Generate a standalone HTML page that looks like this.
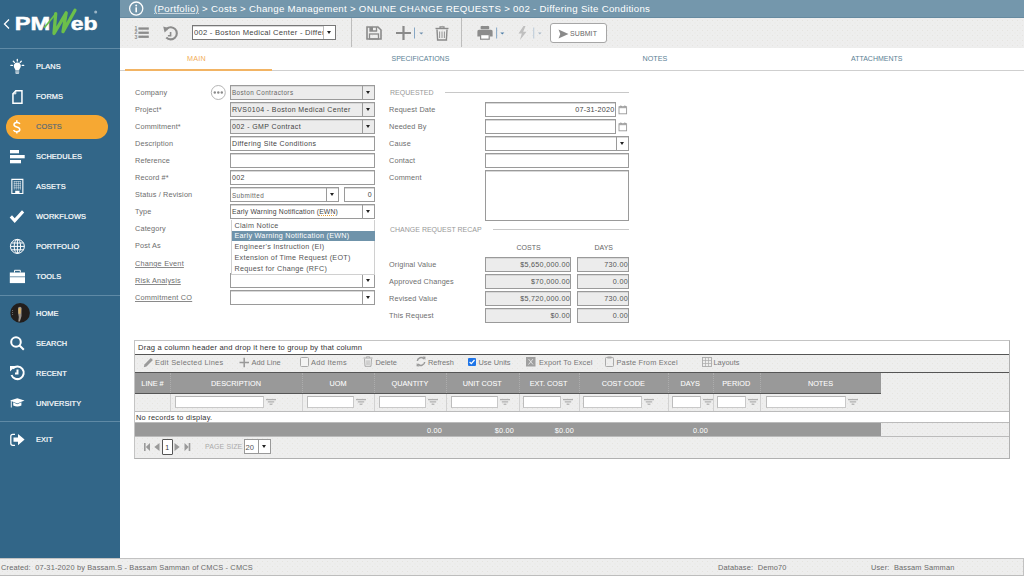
<!DOCTYPE html>
<html><head><meta charset="utf-8">
<style>
*{box-sizing:border-box;margin:0;padding:0}
html,body{width:1024px;height:576px;overflow:hidden;background:#fff;font-family:"Liberation Sans",sans-serif;position:relative}
.a{position:absolute}
#side{left:0;top:0;width:120px;height:558px;background:#326688}
.nav{position:absolute;left:36px;color:#fff;font-size:7.4px;font-weight:normal;-webkit-text-stroke:0.2px #fff;letter-spacing:0.08px;line-height:8px}
.sep{position:absolute;left:0;width:120px;height:1px;background:#5f8aa6}
#hdr{left:120px;top:0;width:904px;height:18px;background:#7497ac;border-bottom:1px solid #668aa0}
#tb{left:120px;top:18px;width:904px;height:29.5px;background-color:#eeeeee;background-image:radial-gradient(circle,#e6e4df 0.6px,transparent 0.7px),radial-gradient(circle,#e6e4df 0.6px,transparent 0.7px);background-size:5px 5px;background-position:0 0,2.5px 2.5px}
.lbl{position:absolute;left:135px;color:#6e6e6e;font-size:7.3px;line-height:10px;letter-spacing:0.15px;margin-top:1px}
.lbl2{position:absolute;left:389px;color:#6e6e6e;font-size:7.3px;line-height:10px;letter-spacing:0.15px;margin-top:1px}
.inp{position:absolute;border:1px solid #9a9a9a;background:#fff;height:15px;box-shadow:inset 0 1px 0 #d8d8d8}
.ro{background-color:#ececec;background-image:radial-gradient(circle,#e3e1dd 0.6px,transparent 0.7px);background-size:4px 4px}
.dd{position:absolute;right:0;top:0;width:12px;height:13px;border-left:1px solid #9a9a9a}
.dd:after{content:"";position:absolute;left:3.3px;top:5px;border-left:2.7px solid transparent;border-right:2.7px solid transparent;border-top:3px solid #222}
.it{position:absolute;left:1px;top:2px;font-size:7px;color:#444;white-space:nowrap;line-height:10px;letter-spacing:0.38px}
.tab{position:absolute;top:55px;font-size:7.2px;color:#5b7f95;letter-spacing:0.2px;line-height:8px}
.gh{position:absolute;top:373px;height:20px;color:#fff;font-size:7.3px;font-weight:normal;-webkit-text-stroke:0.05px #fff;line-height:21px;text-align:center;letter-spacing:0}
.gcb{position:absolute;top:373px;width:1px;height:20px;border-left:1px dotted #adadad}.gcb:after{content:"";position:absolute;left:-1px;top:21px;width:1px;height:17px;background:#d2d2d2}
.fi{position:absolute;top:396px;height:12px;background:#fff;border:1px solid #c9c9c9;border-top-color:#b5b5b5;border-left-color:#bdbdbd}
.fic{position:absolute;top:398px;width:10px;height:8px}
.fic:before{content:"";position:absolute;left:0;top:1px;width:10px;height:1px;background:#999;box-shadow:2px 2px 0 -0px #fff}
.gt{position:absolute;top:357.8px;font-size:7.4px;color:#777;line-height:10px;white-space:nowrap}
.ft{position:absolute;top:562.8px;font-size:7.4px;color:#6a6a6a;line-height:10px;white-space:nowrap;letter-spacing:0.17px}
.dli{left:3px;font-size:7.2px;color:#555;line-height:10px;white-space:nowrap;letter-spacing:0.28px}
.sect{font-size:7px;color:#999;line-height:9px;letter-spacing:0}
.dots{background-color:#eeeeee;background-image:radial-gradient(circle,#e6e4df 0.6px,transparent 0.7px),radial-gradient(circle,#e6e4df 0.6px,transparent 0.7px);background-size:5px 5px;background-position:0 0,2.5px 2.5px}
</style></head><body>

<!-- SIDEBAR -->
<div id="side" class="a">
  <div class="sep" style="top:48px"></div>
  <div class="sep" style="top:295px"></div>
  <div class="sep" style="top:421px"></div>
  <!-- logo -->
  <svg class="a" style="left:0;top:0" width="120" height="48" viewBox="0 0 120 48">
    <path d="M9 19.5 L4.5 24 L9 28.5" fill="none" stroke="#fff" stroke-width="1.3"/>
    <text x="14.8" y="29.8" font-family="Liberation Sans" font-weight="bold" font-size="19" fill="#fff" stroke="#fff" stroke-width="0.5" textLength="35.4" lengthAdjust="spacingAndGlyphs">PM</text>
    <text x="70.8" y="29.8" font-family="Liberation Sans" font-weight="bold" font-size="19" fill="#fff" stroke="#fff" stroke-width="0.5" textLength="26.8" lengthAdjust="spacingAndGlyphs">eb</text>
    <path d="M44.3 27.8 L55.7 13.7" fill="none" stroke="#6cc04a" stroke-width="1.7"/>
    <path d="M55.7 13.7 L54 33.5 L66.2 12.8 L63 31.7 L75 10.2" fill="none" stroke="#6cc04a" stroke-width="3.3" stroke-linejoin="round" stroke-linecap="round"/>
    <circle cx="95.7" cy="12" r="1.5" fill="#9bb5c6"/>
  </svg>
  <!-- nav items -->
  <div class="nav" style="top:62.5px">PLANS</div>
  <div class="nav" style="top:92.5px">FORMS</div>
  <div class="a" style="left:6px;top:114.5px;width:102px;height:24px;border-radius:12px;background:#f6a833"></div>
  <div class="nav" style="top:122.5px;color:#5b6b76;-webkit-text-stroke:0.2px #5b6b76">COSTS</div>
  <div class="nav" style="top:152.5px">SCHEDULES</div>
  <div class="nav" style="top:182.5px">ASSETS</div>
  <div class="nav" style="top:212.5px">WORKFLOWS</div>
  <div class="nav" style="top:242.5px">PORTFOLIO</div>
  <div class="nav" style="top:272.5px">TOOLS</div>
  <div class="nav" style="top:309.5px">HOME</div>
  <div class="nav" style="top:339.5px">SEARCH</div>
  <div class="nav" style="top:369.5px">RECENT</div>
  <div class="nav" style="top:399.5px">UNIVERSITY</div>
  <div class="nav" style="top:435.5px">EXIT</div>
  <!-- icons -->
  <svg class="a" style="left:0;top:50px" width="34" height="400" viewBox="0 50 34 400">
    <g fill="#fff" stroke="none">
      <!-- bulb -->
      <path d="M17.3 62.4 C14.8 62.4 13.6 64.3 13.8 66.3 C14 68 15.3 69 15.4 70.3 H19.2 C19.3 69 20.6 68 20.8 66.3 C21 64.3 19.8 62.4 17.3 62.4 Z"/>
      <rect x="15.3" y="70.6" width="3.9" height="0.9" opacity="0.85"/><rect x="15.3" y="71.8" width="3.9" height="0.9" opacity="0.85"/><rect x="15.6" y="73" width="3.3" height="0.8" opacity="0.85"/>
      <g stroke="#fff" stroke-width="1.3" fill="none" stroke-linecap="round">
        <path d="M17.3 59.4v1.6M13.3 61.2l1.1 1.2M21.3 61.2l-1.1 1.2M10.9 65.4h1.5M22.2 65.4h1.5"/>
      </g>
      <!-- forms -->
      <path d="M15.5 90 H22.7 V104 H12.2 V93.5 Z M13.7 94.1 V102.5 H21.2 V91.5 H16.1 Z" fill-rule="evenodd"/><path d="M12.8 93.8 L15.8 93.8 L15.8 90.5" fill="none" stroke="#fff" stroke-width="1"/>
      <!-- dollar -->
      <g fill="none" stroke="#fff" stroke-width="1.5"><path d="M19.9 124 Q19.3 122.4 16.8 122.4 Q14 122.4 14 124.8 Q14 126.4 16.8 127 Q19.8 127.6 19.8 129.6 Q19.8 131.7 16.8 131.7 Q14.2 131.7 13.6 130"/><path d="M16.8 120.3 V122.4 M16.8 131.7 V133.6"/></g>
      <!-- schedules -->
      <rect x="10" y="150" width="9" height="3.3"/>
      <rect x="10" y="155" width="14.7" height="3.3"/>
      <rect x="10" y="160" width="11" height="3.3"/>
      <!-- assets -->
      <path d="M11.3 178.8 H23.4 V194 H11.3 Z M12.4 179.9 V192.9 H15.2 V190.8 H19.5 V192.9 H22.3 V179.9 Z" fill-rule="evenodd"/>
      <g stroke="#fff" stroke-width="0.45" fill="none"><path d="M14.3 181.2v8.5M16.3 181.2v8.5M18.4 181.2v8.5M20.4 181.2v8.5M13.7 181.5h7.3M13.7 183.6h7.3M13.7 185.7h7.3M13.7 187.8h7.3"/></g>
      <!-- check -->
      <path d="M9.7 217.5 L12 215.2 L14.7 218.2 L22 210.3 L24.2 212.5 L14.7 223.1 Z"/>
      <!-- globe -->
      <g stroke="#fff" stroke-width="1" fill="none">
        <circle cx="17.4" cy="246.4" r="7"/>
        <ellipse cx="17.4" cy="246.4" rx="3.2" ry="7"/>
        <path d="M17.4 239.4v14M10.4 246.4h14M11.3 243h12.2M11.3 249.8h12.2"/>
      </g>
      <!-- tools -->
      <path d="M9.8 272.5 H25 V283.1 H9.8 Z"/>
      <path d="M14.5 272.5 V270.3 H20.3 V272.5" stroke="#fff" stroke-width="1" fill="none"/>
      <rect x="9.8" y="276.5" width="15.2" height="0.7" fill="#326688"/>
      <!-- home avatar -->
      <circle cx="20.1" cy="312.9" r="9.8" fill="#221e1c"/>
      <path d="M18.2 307.5 Q20.5 305.8 21.6 308 L21.5 313 Q21.8 316 21 318 L19.8 321.5 H18.3 L18.8 317 Q17.8 313 18 310 Z" fill="#9a938c"/><path d="M18.4 308.5 Q20.2 307.2 20.9 309 L20.6 313.8 H18.6 Z" fill="#d9b060"/><circle cx="12.6" cy="310.5" r="0.5" fill="#888"/><circle cx="12.6" cy="312.5" r="0.5" fill="#888"/><circle cx="12.6" cy="314.5" r="0.5" fill="#888"/>
      <!-- search -->
      <g stroke="#fff" stroke-width="2" fill="none">
        <circle cx="16" cy="342" r="4.8"/>
        <path d="M19.5 345.5 L23.8 349.8"/>
      </g>
      <!-- recent -->
      <g stroke="#fff" stroke-width="2" fill="none">
        <path d="M12.8 368.5 A6.3 6.3 0 1 1 11.5 375"/>
        <path d="M17.5 369.5 V373.5 H15"/>
      </g>
      <path d="M10 366 L15.5 366 L10 371.5 Z"/>
      <!-- university -->
      <path d="M10 400.5 L17.3 398.3 L24.5 400.5 L17.3 403.5 Z"/>
      <path d="M13.2 402.3 V405.5 Q17.3 407.5 21.4 405.5 V402.3 L17.3 404.2 Z"/>
      <path d="M11.3 401 V407.5" stroke="#fff" stroke-width="0.9" fill="none"/>
      <!-- exit -->
      <path d="M15 434.3 H12.8 Q10.8 434.3 10.8 436.3 V443.3 Q10.8 445.3 12.8 445.3 H15" stroke="#fff" stroke-width="1.3" fill="none"/>
      <path d="M13.5 437.5 H18 V434 L24.6 439.6 L18 445.3 V441.7 H13.5 Z"/>
    </g>
  </svg>
</div>

<!-- HEADER -->
<div id="hdr" class="a">
  <svg class="a" style="left:8px;top:1px" width="16" height="16" viewBox="0 0 16 16">
    <circle cx="8.2" cy="7.6" r="6.6" fill="none" stroke="#fff" stroke-width="1.3"/>
    <rect x="7.4" y="6.3" width="1.6" height="5" fill="#fff"/>
    <circle cx="8.2" cy="4.5" r="0.95" fill="#fff"/>
  </svg>
  <div class="a" style="left:34px;top:2.7px;font-size:9.7px;line-height:12px;color:#fff;white-space:nowrap;letter-spacing:0.28px"><span style="text-decoration:underline;text-decoration-color:rgba(255,255,255,0.6);text-decoration-thickness:0.5px;text-underline-offset:1.2px">(Portfolio)</span> &gt; Costs &gt; Change Management &gt; ONLINE CHANGE REQUESTS &gt; 002 - Differing Site Conditions</div>
</div>
<div id="tb" class="a">
  <!-- list icon -->
  <svg class="a" style="left:13px;top:6px" width="18" height="17" viewBox="0 0 18 17">
    <g fill="#8c8c8c">
      <rect x="5.4" y="3.4" width="10.4" height="2.3"/><rect x="5.4" y="7.6" width="10.4" height="2.3"/><rect x="5.4" y="11.6" width="10.4" height="2.3"/>
    </g>
    <g fill="#8c8c8c" font-family="Liberation Sans" font-weight="bold" font-size="5.2"><text x="1.6" y="6">1</text><text x="1.6" y="10.3">2</text><text x="1.6" y="14.6">3</text></g>
  </svg>
  <!-- history icon -->
  <svg class="a" style="left:41px;top:24px;top:6px" width="19" height="18" viewBox="0 0 19 18">
    <path d="M5.6 4.8 A6.1 6.1 0 1 1 5.3 13.5" fill="none" stroke="#8c8c8c" stroke-width="2.1"/>
    <path d="M2.2 2.6 L8.2 4.2 L3.6 8.6 Z" fill="#8c8c8c"/>
    <path d="M9.6 7.9 V11.7 H7" fill="none" stroke="#8c8c8c" stroke-width="1.6"/>
  </svg>
  <!-- record select -->
  <div class="inp" style="left:72px;top:7px;width:144px;height:15px;border-color:#777"><div class="it" style="left:1px;top:2px;font-size:7.6px;color:#444;width:130px;overflow:hidden;letter-spacing:0.27px">002 - Boston Medical Center - Differing Site</div><div class="dd" style="border-color:#bbb;background:#fff"></div></div>
  <div class="a" style="left:231px;top:0;width:1px;height:29px;background:#bdbdbd"></div>
  <div class="a" style="left:341px;top:0;width:1px;height:29px;background:#bdbdbd"></div>
  <!-- save -->
  <svg class="a" style="left:246px;top:8px" width="16" height="14" viewBox="0 0 16 14">
    <path d="M1 1 H12 L15 4 V13 H1 Z" fill="none" stroke="#8a8a8a" stroke-width="1.6"/>
    <path d="M4 1 V5 H10.5 V1" fill="none" stroke="#8a8a8a" stroke-width="1.3"/><rect x="4" y="1" width="3" height="4" fill="#8a8a8a"/>
    <rect x="3.5" y="8" width="9" height="5" fill="none" stroke="#8a8a8a" stroke-width="1.3"/>
  </svg>
  <!-- plus -->
  <svg class="a" style="left:276px;top:8px" width="30" height="14" viewBox="0 0 30 14">
    <path d="M0 7 H15 M7.5 0 V14" stroke="#8a8a8a" stroke-width="2.2"/>
    <rect x="18" y="1.5" width="0.9" height="11" fill="#7b9fc0"/>
    <path d="M23.3 6.5 H27.3 L25.3 8.6 Z" fill="#6f8fae"/>
  </svg>
  <!-- trash -->
  <svg class="a" style="left:315px;top:8px" width="14" height="15" viewBox="0 0 14 15">
    <path d="M0.5 2.5 H13.5" stroke="#8a8a8a" stroke-width="1.4"/>
    <path d="M5 2.5 V0.8 H9 V2.5" fill="none" stroke="#8a8a8a" stroke-width="1.2"/>
    <path d="M2 3.5 L2.6 14 H11.4 L12 3.5" fill="none" stroke="#8a8a8a" stroke-width="1.4"/>
    <path d="M4.6 5.5 V12 M7 5.5 V12 M9.4 5.5 V12" stroke="#8a8a8a" stroke-width="0.9"/>
  </svg>
  <!-- printer -->
  <svg class="a" style="left:357px;top:8px" width="30" height="14" viewBox="0 0 30 14">
    <rect x="3.6" y="0" width="8.6" height="3.2" rx="0.8" fill="#8c8c8c"/>
    <path d="M2 3.8 H14 Q15.6 3.8 15.6 5.4 V10.6 H12.8 V8.6 H3 V10.6 H0.4 V5.4 Q0.4 3.8 2 3.8 Z" fill="#8c8c8c"/>
    <rect x="3.6" y="8.6" width="8.6" height="4.6" fill="#fff" stroke="#8c8c8c" stroke-width="1.2"/>
    <rect x="19.2" y="1.5" width="0.9" height="11" fill="#7b9fc0"/>
    <path d="M23.3 6.5 H27.3 L25.3 8.6 Z" fill="#4f7ea8"/>
  </svg>
  <!-- lightning -->
  <svg class="a" style="left:397px;top:8px" width="26" height="14" viewBox="0 0 26 14">
    <path d="M6.5 0 L1.5 7.5 H4.8 L3 14 L9.5 5.8 H6.2 L8.5 0 Z" fill="#bfbfbf"/>
    <rect x="16.3" y="1.5" width="0.9" height="11" fill="#b5c6d6"/>
    <path d="M21 6.5 H24.6 L22.8 8.4 Z" fill="#a9b9c8"/>
  </svg>
  <!-- submit -->
  <div class="a" style="left:430px;top:5px;width:57px;height:20px;border:1px solid #a6a6a6;border-radius:3px;background:#fff"></div>
  <svg class="a" style="left:437.5px;top:10.5px" width="12" height="11" viewBox="0 0 12 11">
    <path d="M0.5 0.5 L10.5 5 L0.5 9.5 L2.3 5 Z" fill="#8a8a8a"/>
  </svg>
  <div class="a" style="left:450px;top:11px;font-size:7px;line-height:9px;color:#666;letter-spacing:0.1px">SUBMIT</div>
</div>
<!-- tabs -->
<div class="a" style="left:120px;top:70px;width:904px;height:1px;background:#cfcfcf"></div>
<div class="a" style="left:125px;top:69px;width:147px;height:2px;background:#f2b464"></div>
<div class="tab" style="left:187px;color:#f2ad58">MAIN</div>
<div class="tab" style="left:391.5px;font-size:7px;letter-spacing:0">SPECIFICATIONS</div>
<div class="tab" style="left:642.5px;letter-spacing:0">NOTES</div>
<div class="tab" style="left:851px;font-size:7px;letter-spacing:0">ATTACHMENTS</div>

<!-- FORM LEFT -->
<div class="lbl" style="top:87px">Company</div>
<div class="lbl" style="top:104px">Project*</div>
<div class="lbl" style="top:121px">Commitment*</div>
<div class="lbl" style="top:138px">Description</div>
<div class="lbl" style="top:155px">Reference</div>
<div class="lbl" style="top:172px">Record #*</div>
<div class="lbl" style="top:189px">Status / Revision</div>
<div class="lbl" style="top:206px">Type</div>
<div class="lbl" style="top:223px">Category</div>
<div class="lbl" style="top:240px">Post As</div>
<div class="lbl" style="top:257px;text-decoration:underline;text-decoration-color:#8a8a8a;text-underline-offset:0.5px;margin-top:2px;letter-spacing:0.22px">Change Event</div>
<div class="lbl" style="top:274px;text-decoration:underline;text-decoration-color:#8a8a8a;text-underline-offset:0.5px;margin-top:2px;letter-spacing:0.22px">Risk Analysis</div>
<div class="lbl" style="top:291px;text-decoration:underline;text-decoration-color:#8a8a8a;text-underline-offset:0.5px;margin-top:2px;letter-spacing:0.22px">Commitment CO</div>
<svg class="a" style="left:210px;top:84px" width="17" height="17" viewBox="0 0 17 17"><circle cx="8.3" cy="8.5" r="7" fill="#fff" stroke="#b5b5b5" stroke-width="1"/><circle cx="4.8" cy="8.5" r="1.2" fill="#8a8a8a"/><circle cx="8.3" cy="8.5" r="1.2" fill="#8a8a8a"/><circle cx="11.8" cy="8.5" r="1.2" fill="#8a8a8a"/></svg>
<div class="inp ro" style="left:230px;top:85px;width:145px"><div class="it" style="font-size:6.3px;color:#666;top:2.3px;letter-spacing:0.42px">Boston Contractors</div><div class="dd"></div></div>
<div class="inp ro" style="left:230px;top:102px;width:145px"><div class="it">RVS0104 - Boston Medical Center</div><div class="dd"></div></div>
<div class="inp ro" style="left:230px;top:119px;width:145px"><div class="it">002 - GMP Contract</div><div class="dd"></div></div>
<div class="inp" style="left:230px;top:136px;width:145px"><div class="it">Differing Site Conditions</div></div>
<div class="inp" style="left:230px;top:153px;width:145px"></div>
<div class="inp" style="left:230px;top:170px;width:145px"><div class="it">002</div></div>
<div class="inp" style="left:230px;top:187px;width:109px"><div class="it" style="font-size:6.3px;color:#666;top:2.5px;letter-spacing:0.42px">Submitted</div><div class="dd"></div></div>
<div class="inp" style="left:344px;top:187px;width:31px"><div class="it" style="left:auto;right:2px">0</div></div>
<div class="inp" style="left:230px;top:204px;width:145px"><div class="it" style="font-size:6.8px;color:#444;letter-spacing:0.18px">Early Warning Notification (<span style="text-decoration:underline dotted #e8a33a;text-decoration-thickness:1px;text-underline-offset:1px">EWN</span>)</div><div class="dd"></div></div>
<div class="inp" style="left:230px;top:273px;width:145px"><div class="dd"></div></div>
<div class="inp" style="left:230px;top:290px;width:145px"><div class="dd"></div></div>
<div class="a" style="left:230.5px;top:219.5px;width:144px;height:55px;background:#fff;border:1px solid #d0d0d0;border-top:none">
<div class="a" style="left:0;top:11px;width:143px;height:10.7px;background:#6f93aa"></div>
<div class="a dli" style="top:1px">Claim Notice</div>
<div class="a dli" style="top:11.7px;color:#fff">Early Warning Notification (EWN)</div>
<div class="a dli" style="top:22.7px">Engineer's Instruction (EI)</div>
<div class="a dli" style="top:33.6px">Extension of Time Request (EOT)</div>
<div class="a dli" style="top:44.5px">Request for Change (RFC)</div>
</div>
<!-- FORM RIGHT -->
<div class="a sect" style="left:390px;top:88px">REQUESTED</div>
<div class="a" style="left:445px;top:92px;width:184px;height:1px;background:#c8c8c8"></div>
<div class="lbl2" style="top:104px">Request Date</div>
<div class="lbl2" style="top:121px">Needed By</div>
<div class="lbl2" style="top:138px">Cause</div>
<div class="lbl2" style="top:155px">Contact</div>
<div class="lbl2" style="top:172px">Comment</div>
<div class="inp" style="left:485px;top:102px;width:131px"><div class="it" style="left:auto;right:0.5px;font-size:7.2px;color:#444;letter-spacing:0.25px">07-31-2020</div></div>
<div class="inp" style="left:485px;top:119px;width:131px"></div>
<svg class="a" style="left:617.5px;top:104px" width="10" height="11" viewBox="0 0 10 11"><rect x="1" y="2.8" width="7.6" height="7" fill="none" stroke="#999" stroke-width="0.9"/><rect x="1" y="2.6" width="7.6" height="1.6" fill="#aaa"/><path d="M1.8 3 Q2.8 0.3 3.8 3 M5.8 3 Q6.8 0.3 7.8 3" fill="none" stroke="#999" stroke-width="0.8"/></svg>
<svg class="a" style="left:617.5px;top:121px" width="10" height="11" viewBox="0 0 10 11"><rect x="1" y="2.8" width="7.6" height="7" fill="none" stroke="#999" stroke-width="0.9"/><rect x="1" y="2.6" width="7.6" height="1.6" fill="#aaa"/><path d="M1.8 3 Q2.8 0.3 3.8 3 M5.8 3 Q6.8 0.3 7.8 3" fill="none" stroke="#999" stroke-width="0.8"/></svg>
<div class="inp" style="left:485px;top:136px;width:144px"><div class="dd"></div></div>
<div class="inp" style="left:485px;top:153px;width:144px"></div>
<div class="inp" style="left:485px;top:170px;width:144px;height:50.5px"></div>
<div class="a sect" style="left:390px;top:225px">CHANGE REQUEST RECAP</div>
<div class="a" style="left:493px;top:229px;width:136px;height:1px;background:#c8c8c8"></div>
<div class="a" style="left:516.5px;top:243.5px;font-size:7px;color:#666;line-height:8px;letter-spacing:0">COSTS</div>
<div class="a" style="left:594.5px;top:243.5px;font-size:7px;color:#666;line-height:8px;letter-spacing:0">DAYS</div>
<div class="lbl2" style="top:259px">Original Value</div>
<div class="inp ro" style="left:485px;top:257px;width:86px"><div class="it" style="left:auto;right:2px;right:0;font-size:7.2px;color:#555;letter-spacing:0.3px">$5,650,000.00</div></div>
<div class="inp ro" style="left:577px;top:257px;width:52px"><div class="it" style="left:auto;right:2px;right:0;font-size:7.2px;color:#555;letter-spacing:0.3px">730.00</div></div>
<div class="lbl2" style="top:276px">Approved Changes</div>
<div class="inp ro" style="left:485px;top:274px;width:86px"><div class="it" style="left:auto;right:2px;right:0;font-size:7.2px;color:#555;letter-spacing:0.3px">$70,000.00</div></div>
<div class="inp ro" style="left:577px;top:274px;width:52px"><div class="it" style="left:auto;right:2px;right:0;font-size:7.2px;color:#555;letter-spacing:0.3px">0.00</div></div>
<div class="lbl2" style="top:293px">Revised Value</div>
<div class="inp ro" style="left:485px;top:291px;width:86px"><div class="it" style="left:auto;right:2px;right:0;font-size:7.2px;color:#555;letter-spacing:0.3px">$5,720,000.00</div></div>
<div class="inp ro" style="left:577px;top:291px;width:52px"><div class="it" style="left:auto;right:2px;right:0;font-size:7.2px;color:#555;letter-spacing:0.3px">730.00</div></div>
<div class="lbl2" style="top:310px">This Request</div>
<div class="inp ro" style="left:485px;top:308px;width:86px"><div class="it" style="left:auto;right:2px;right:0;font-size:7.2px;color:#555;letter-spacing:0.3px">$0.00</div></div>
<div class="inp ro" style="left:577px;top:308px;width:52px"><div class="it" style="left:auto;right:2px;right:0;font-size:7.2px;color:#555;letter-spacing:0.3px">0.00</div></div>

<!-- GRID -->
<div class="a dots" style="left:134px;top:340px;width:876px;height:119px;border:1px solid #c4c4c4;border-right-color:#b0b0b0;border-bottom-color:#b0b0b0"></div>
<div class="a" style="left:135px;top:341px;width:874px;height:13px;background:#fff"></div>
<div class="a" style="left:138px;top:343px;font-size:7.6px;color:#333;line-height:10px;white-space:nowrap;letter-spacing:0.2px">Drag a column header and drop it here to group by that column</div>
<div class="a" style="left:135px;top:354px;width:874px;height:1px;background:#555"></div>
<div class="a" style="left:135px;top:372px;width:874px;height:1px;background:#555"></div>
<svg class="a" style="left:142.5px;top:356.5px" width="11" height="11" viewBox="0 0 11 11"><path d="M0.8 10.3 L1.4 7.4 L7.8 1 L9.9 3.1 L3.5 9.6 Z" fill="#9a9a9a"/></svg>
<div class="gt" style="left:155px;letter-spacing:0.27px">Edit Selected Lines</div>
<svg class="a" style="left:239px;top:357px" width="11" height="11" viewBox="0 0 11 11"><path d="M0.5 5.5 H10 M5.2 0.8 V10.3" stroke="#999" stroke-width="1.5"/></svg>
<div class="gt" style="left:251.5px">Add Line</div>
<div class="a" style="left:299.5px;top:357px;width:9px;height:9.5px;border:1px solid #aaa;border-radius:1.5px;background:#f4f4f4"></div>
<div class="gt" style="left:311px;letter-spacing:0.3px">Add Items</div>
<svg class="a" style="left:363px;top:356px" width="10" height="11" viewBox="0 0 10 11"><path d="M0.5 2 H9.5" stroke="#aaa" stroke-width="1"/><path d="M3.5 2 V0.7 H6.5 V2" fill="none" stroke="#aaa" stroke-width="0.8"/><path d="M1.5 2.8 L2 10.3 H8 L8.5 2.8" fill="none" stroke="#aaa" stroke-width="1"/><path d="M3.8 4.3 V9 M5 4.3 V9 M6.2 4.3 V9" stroke="#aaa" stroke-width="0.6"/></svg>
<div class="gt" style="left:375.5px">Delete</div>
<svg class="a" style="left:416px;top:356px" width="10" height="11" viewBox="0 0 10 11"><path d="M1.3 5 A3.8 3.8 0 0 1 8 3" fill="none" stroke="#999" stroke-width="1.5"/><path d="M8.7 6 A3.8 3.8 0 0 1 2 8" fill="none" stroke="#999" stroke-width="1.5"/><path d="M6.5 0.5 L9.5 0.8 L9.2 4 Z" fill="#999"/><path d="M3.5 10.5 L0.5 10.2 L0.8 7 Z" fill="#999"/></svg>
<div class="gt" style="left:428px">Refresh</div>
<svg class="a" style="left:467.5px;top:358px" width="8" height="8" viewBox="0 0 8 8"><rect x="0" y="0" width="8" height="8" rx="1" fill="#1e74e8"/><path d="M1.6 4 L3.3 5.7 L6.5 2" fill="none" stroke="#fff" stroke-width="1.2"/></svg>
<div class="gt" style="left:478.5px">Use Units</div>
<svg class="a" style="left:526px;top:357px" width="10" height="10" viewBox="0 0 10 10"><rect x="0" y="0" width="9.5" height="9.5" fill="#a0a0a0"/><path d="M2.5 2 L7 7.5 M7 2 L2.5 7.5" stroke="#e8e8e8" stroke-width="0.9"/></svg>
<div class="gt" style="left:539px;letter-spacing:0.15px">Export To Excel</div>
<svg class="a" style="left:605px;top:356px" width="9" height="11" viewBox="0 0 9 11"><rect x="0.5" y="1.5" width="8" height="9" rx="0.8" fill="none" stroke="#aaa" stroke-width="1"/><rect x="2.5" y="0.5" width="4" height="2" fill="#aaa"/></svg>
<div class="gt" style="left:616.5px;letter-spacing:0.18px">Paste From Excel</div>
<svg class="a" style="left:702px;top:357px" width="10" height="10" viewBox="0 0 10 10"><rect x="0.5" y="0.5" width="9" height="9" fill="none" stroke="#aaa" stroke-width="0.9"/><path d="M0.5 3.5 H9.5 M0.5 6.5 H9.5 M3.5 0.5 V9.5 M6.5 0.5 V9.5" stroke="#aaa" stroke-width="0.7"/></svg>
<div class="gt" style="left:713.5px">Layouts</div>
<div class="a" style="left:135px;top:373px;width:746px;height:20px;background:#999"></div>
<div class="a gh" style="left:135px;width:35px">LINE #</div>
<div class="a gh" style="left:170px;width:132px">DESCRIPTION</div>
<div class="gcb" style="left:170px"></div>
<div class="a gh" style="left:302px;width:72px">UOM</div>
<div class="gcb" style="left:302px"></div>
<div class="a gh" style="left:374px;width:72px">QUANTITY</div>
<div class="gcb" style="left:374px"></div>
<div class="a gh" style="left:446px;width:72.5px">UNIT COST</div>
<div class="gcb" style="left:446px"></div>
<div class="a gh" style="left:518.5px;width:60.0px">EXT. COST</div>
<div class="gcb" style="left:518.5px"></div>
<div class="a gh" style="left:578.5px;width:89.5px">COST CODE</div>
<div class="gcb" style="left:578.5px"></div>
<div class="a gh" style="left:668px;width:44.5px">DAYS</div>
<div class="gcb" style="left:668px"></div>
<div class="a gh" style="left:712.5px;width:47.5px">PERIOD</div>
<div class="gcb" style="left:712.5px"></div>
<div class="a gh" style="left:760px;width:121px">NOTES</div>
<div class="gcb" style="left:760px"></div>
<div class="a" style="left:135px;top:393px;width:746px;height:1px;background:#555"></div>
<div class="fi" style="left:175px;width:89px"></div>
<svg class="a" style="left:266px;top:397.7px" width="10" height="9" viewBox="0 0 10 9"><path d="M0 1.6 H10" stroke="#b0b0b0" stroke-width="1.3"/><path d="M1.8 3.9 H8.2 M3.6 6.2 H6.4" stroke="#8f8f8f" stroke-width="0.8"/></svg>
<div class="fi" style="left:307px;width:47px"></div>
<svg class="a" style="left:356px;top:397.7px" width="10" height="9" viewBox="0 0 10 9"><path d="M0 1.6 H10" stroke="#b0b0b0" stroke-width="1.3"/><path d="M1.8 3.9 H8.2 M3.6 6.2 H6.4" stroke="#8f8f8f" stroke-width="0.8"/></svg>
<div class="fi" style="left:379px;width:47px"></div>
<svg class="a" style="left:428px;top:397.7px" width="10" height="9" viewBox="0 0 10 9"><path d="M0 1.6 H10" stroke="#b0b0b0" stroke-width="1.3"/><path d="M1.8 3.9 H8.2 M3.6 6.2 H6.4" stroke="#8f8f8f" stroke-width="0.8"/></svg>
<div class="fi" style="left:451px;width:47px"></div>
<svg class="a" style="left:500px;top:397.7px" width="10" height="9" viewBox="0 0 10 9"><path d="M0 1.6 H10" stroke="#b0b0b0" stroke-width="1.3"/><path d="M1.8 3.9 H8.2 M3.6 6.2 H6.4" stroke="#8f8f8f" stroke-width="0.8"/></svg>
<div class="fi" style="left:523px;width:38px"></div>
<svg class="a" style="left:563px;top:397.7px" width="10" height="9" viewBox="0 0 10 9"><path d="M0 1.6 H10" stroke="#b0b0b0" stroke-width="1.3"/><path d="M1.8 3.9 H8.2 M3.6 6.2 H6.4" stroke="#8f8f8f" stroke-width="0.8"/></svg>
<div class="fi" style="left:583px;width:59px"></div>
<svg class="a" style="left:644px;top:397.7px" width="10" height="9" viewBox="0 0 10 9"><path d="M0 1.6 H10" stroke="#b0b0b0" stroke-width="1.3"/><path d="M1.8 3.9 H8.2 M3.6 6.2 H6.4" stroke="#8f8f8f" stroke-width="0.8"/></svg>
<div class="fi" style="left:672px;width:29px"></div>
<svg class="a" style="left:703px;top:397.7px" width="10" height="9" viewBox="0 0 10 9"><path d="M0 1.6 H10" stroke="#b0b0b0" stroke-width="1.3"/><path d="M1.8 3.9 H8.2 M3.6 6.2 H6.4" stroke="#8f8f8f" stroke-width="0.8"/></svg>
<div class="fi" style="left:717px;width:29px"></div>
<svg class="a" style="left:748px;top:397.7px" width="10" height="9" viewBox="0 0 10 9"><path d="M0 1.6 H10" stroke="#b0b0b0" stroke-width="1.3"/><path d="M1.8 3.9 H8.2 M3.6 6.2 H6.4" stroke="#8f8f8f" stroke-width="0.8"/></svg>
<div class="fi" style="left:765.5px;width:80.0px"></div>
<svg class="a" style="left:848px;top:397.7px" width="10" height="9" viewBox="0 0 10 9"><path d="M0 1.6 H10" stroke="#b0b0b0" stroke-width="1.3"/><path d="M1.8 3.9 H8.2 M3.6 6.2 H6.4" stroke="#8f8f8f" stroke-width="0.8"/></svg>
<div class="a" style="left:135px;top:410.5px;width:874px;height:1px;background:#bbb"></div>
<div class="a" style="left:135px;top:411.5px;width:874px;height:10.5px;background:#fff"></div>
<div class="a" style="left:136px;top:413px;font-size:7.4px;color:#333;line-height:10px;white-space:nowrap;letter-spacing:0.25px">No records to display.</div>
<div class="a" style="left:135px;top:422px;width:874px;height:1px;background:#bbb"></div>
<div class="a" style="left:135px;top:423px;width:746px;height:13px;background:#999"></div>
<div class="a" style="left:135px;top:436px;width:874px;height:1px;background:#bbb"></div>
<div class="a" style="left:382px;top:425.5px;width:60px;text-align:right;font-size:7.3px;color:#fff;line-height:10px;letter-spacing:0.2px">0.00</div>
<div class="a" style="left:454px;top:425.5px;width:60px;text-align:right;font-size:7.3px;color:#fff;line-height:10px;letter-spacing:0.2px">$0.00</div>
<div class="a" style="left:514px;top:425.5px;width:60px;text-align:right;font-size:7.3px;color:#fff;line-height:10px;letter-spacing:0.2px">$0.00</div>
<div class="a" style="left:648px;top:425.5px;width:60px;text-align:right;font-size:7.3px;color:#fff;line-height:10px;letter-spacing:0.2px">0.00</div>
<svg class="a" style="left:143px;top:442px" width="50" height="10" viewBox="0 0 50 10"><g fill="#9a9a9a"><rect x="1" y="1" width="1.6" height="8"/><path d="M7 1 L2.8 5 L7 9 Z"/><path d="M16.5 1 L11.3 5 L16.5 9 Z"/><path d="M31.5 1 L36.7 5 L31.5 9 Z"/><path d="M41.5 1 L45.7 5 L41.5 9 Z"/><rect x="45.7" y="1" width="1.6" height="8"/></g></svg>
<div class="a" style="left:162px;top:439px;width:10.5px;height:16px;border:1px solid #555;background:#fff;border-radius:1px"><div class="a" style="left:0;top:3px;width:8.5px;text-align:center;font-size:7px;color:#333;line-height:9px">1</div></div>
<div class="a" style="left:205px;top:442px;font-size:7px;color:#aaa;line-height:9px;letter-spacing:0.1px">PAGE SIZE</div>
<div class="a" style="left:243.5px;top:439px;width:27px;height:15px;border:1px solid #999;background:#fff"><div class="a" style="left:1px;top:2.5px;font-size:7.6px;color:#555;line-height:9px">20</div><div class="dd" style="height:13px"></div></div>

<!-- FOOTER -->
<div class="a dots" style="left:0;top:558px;width:1024px;height:18px;border-top:1px solid #c2c2c2;border-bottom:1px solid #bdbdbd;border-right:1px solid #c2c2c2"></div>
<div class="ft" style="left:1px">Created:&nbsp; 07-31-2020 by Bassam.S - Bassam Samman of CMCS - CMCS</div>
<div class="ft" style="left:718px">Database:&nbsp; Demo70</div>
<div class="ft" style="left:871px">User:&nbsp; Bassam Samman</div>

</body></html>
